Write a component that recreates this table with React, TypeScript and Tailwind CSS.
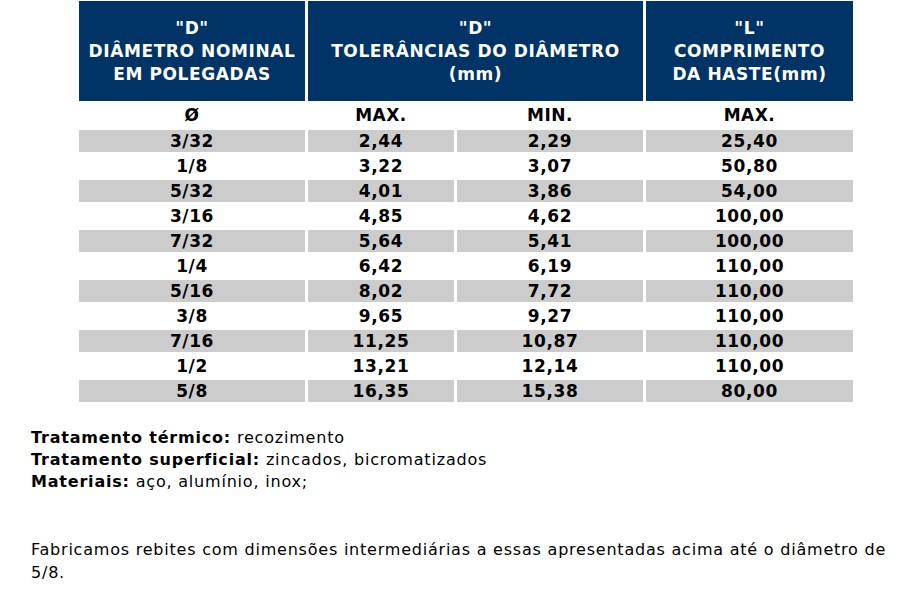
const rows = [
  ["3/32", "2,44", "2,29", "25,40"],
  ["1/8", "3,22", "3,07", "50,80"],
  ["5/32", "4,01", "3,86", "54,00"],
  ["3/16", "4,85", "4,62", "100,00"],
  ["7/32", "5,64", "5,41", "100,00"],
  ["1/4", "6,42", "6,19", "110,00"],
  ["5/16", "8,02", "7,72", "110,00"],
  ["3/8", "9,65", "9,27", "110,00"],
  ["7/16", "11,25", "10,87", "110,00"],
  ["1/2", "13,21", "12,14", "110,00"],
  ["5/8", "16,35", "15,38", "80,00"],
];

function Head({ lines, className }: { lines: string[]; className: string }) {
  return (
    <div className={`flex h-[100px] flex-col items-center justify-center bg-[#003366] text-center text-[17px] leading-[23px] tracking-[0.6px] text-white ${className}`}>
      {lines.map((l) => (
        <span key={l}>{l}</span>
      ))}
    </div>
  );
}

export default function App() {
  return (
    <div className="min-h-[595px] w-[902px] bg-white font-['DejaVu_Sans',Verdana,sans-serif] text-black">
      <div className="ml-[79px] mt-px grid w-[774px] grid-cols-[226px_146px_186px_207px] gap-x-[3px] gap-y-[3px] text-center text-[17px] font-bold">
        <Head lines={['"D"', "DIÂMETRO NOMINAL", "EM POLEGADAS"]} className="" />
        <Head lines={['"D"', "TOLERÂNCIAS DO DIÂMETRO", "(mm)"]} className="col-span-2" />
        <Head lines={['"L"', "COMPRIMENTO", "DA HASTE(mm)"]} className="" />

        <div className="h-[23px] leading-[23px] tracking-[0.5px]">Ø</div>
        <div className="h-[23px] leading-[23px] tracking-[0.5px]">MAX.</div>
        <div className="h-[23px] leading-[23px] tracking-[0.5px]">MIN.</div>
        <div className="h-[23px] leading-[23px] tracking-[0.5px]">MAX.</div>

        {rows.map((r, i) =>
          r.map((c, j) => (
            <div
              key={`${i}-${j}`}
              className={`h-[22px] leading-[22px] tracking-[0.6px] ${i % 2 === 0 ? "bg-[#cccccc]" : "bg-white"}`}
            >
              {c}
            </div>
          ))
        )}
      </div>

      <div className="ml-[31px] mt-[25px] text-[16px] leading-[22px] tracking-[0.8px]">
        <p>
          <b>Tratamento térmico:</b> recozimento
        </p>
        <p>
          <b>Tratamento superficial:</b> zincados, bicromatizados
        </p>
        <p>
          <b>Materiais:</b> aço, alumínio, inox;
        </p>
      </div>

      <p className="ml-[31px] mt-[45px] text-[16px] leading-[23px] tracking-[0.78px]">
        Fabricamos rebites com dimensões intermediárias a essas apresentadas acima até o diâmetro de
        <br />
        5/8.
      </p>
    </div>
  );
}
